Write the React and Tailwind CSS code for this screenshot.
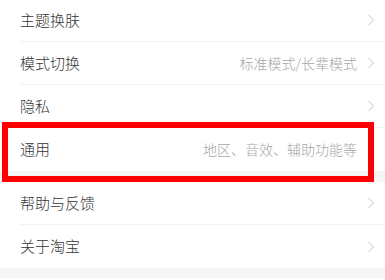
const groups = [
  [
    { label: '主题换肤' },
    { label: '模式切换', value: '标准模式/长辈模式' },
    { label: '隐私' },
    { label: '通用', value: '地区、音效、辅助功能等' },
  ],
  [{ label: '帮助与反馈' }, { label: '关于淘宝' }],
];

function Chevron() {
  return (
    <svg width="8" height="12" viewBox="0 0 8 12" className="ml-[10px] shrink-0">
      <polyline points="1.5,1 6.5,6 1.5,11" fill="none" stroke="#c4c4c4" strokeWidth="1" />
    </svg>
  );
}

function Row({ label, value, last }) {
  return (
    <div className="bg-white pl-5">
      <div
        className={`flex h-[43px] items-center pr-[10px] ${last ? '' : 'border-b border-[#f2f2f2]'}`}
      >
        <span className="flex-1 text-[15px] font-light text-[#333333]">{label}</span>
        {value && <span className="text-[14px] font-light text-[#a6a6a6]">{value}</span>}
        <Chevron />
      </div>
    </div>
  );
}

export default function App() {
  return (
    <div
      className="relative h-[280px] w-[385px] overflow-hidden bg-[#f5f5f5]"
      style={{ fontFamily: '"Noto Sans CJK SC", "Noto Sans", sans-serif' }}
    >
      <div className="-mt-px">
        {groups[0].map((r, i) => (
          <Row key={r.label} {...r} last={i === groups[0].length - 1} />
        ))}
      </div>
      <div className="mt-[11px]">
        {groups[1].map((r, i) => (
          <Row key={r.label} {...r} last={i === groups[1].length - 1} />
        ))}
      </div>
      <div className="mt-[10px] h-10 bg-white" />

      {/* highlight frame */}
      <div className="pointer-events-none absolute left-[2px] top-[122px] h-[60px] w-[372px] border-[6px] border-[#ff0000]" />
    </div>
  );
}
